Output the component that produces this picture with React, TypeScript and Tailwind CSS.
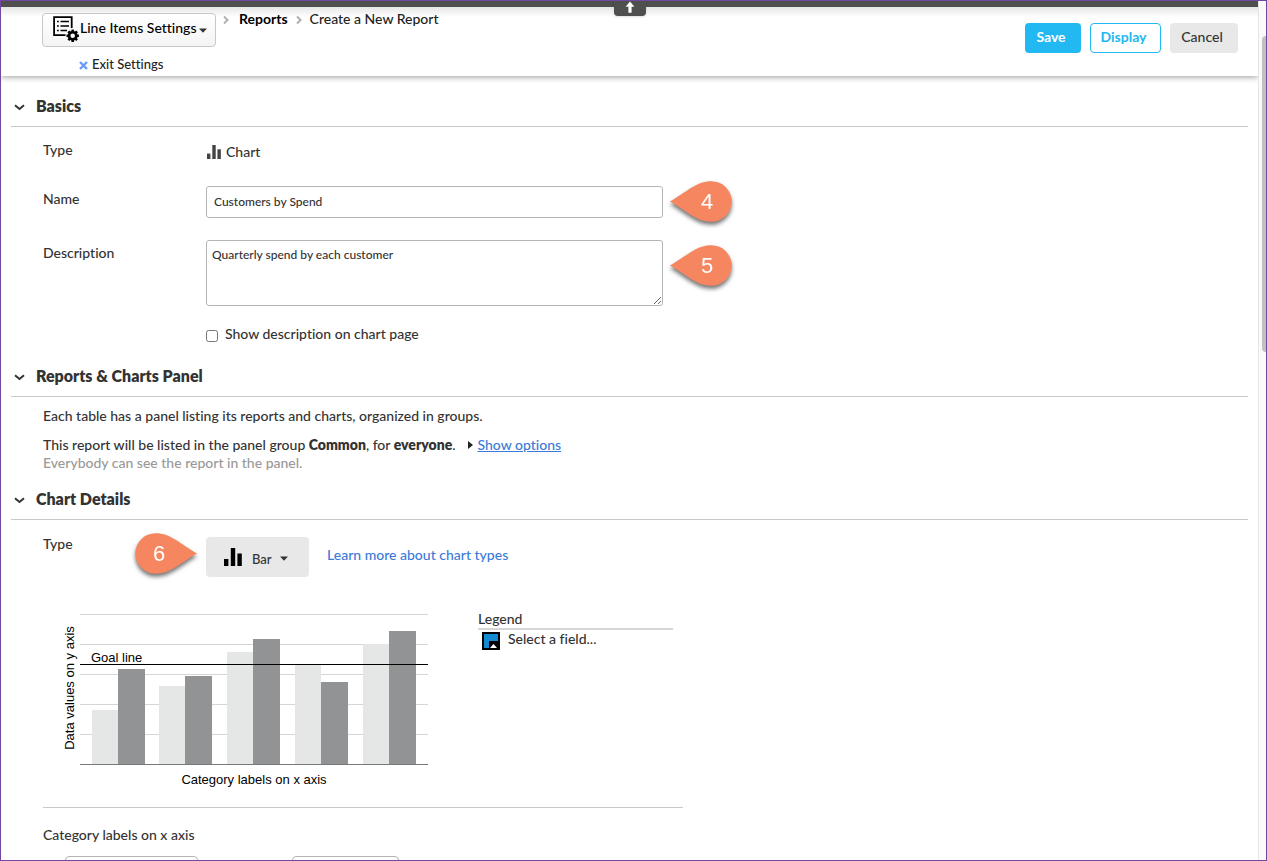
import { useState, type ReactNode } from "react";

function Caret({ className }: { className: string }) {
  return (
    <svg viewBox="0 0 8 5" className={className} aria-hidden="true">
      <path d="M0 0.5H8L4 4.7Z" fill="currentColor" />
    </svg>
  );
}

function BarsIcon({ className }: { className: string }) {
  return (
    <svg viewBox="0 0 18 18" className={className} fill="currentColor" aria-hidden="true">
      <rect x="0" y="11" width="4.4" height="7" />
      <rect x="6.8" y="0" width="4.4" height="18" />
      <rect x="13.4" y="5.5" width="4.4" height="12.5" />
    </svg>
  );
}

function SettingsIcon() {
  const teeth = [0, 45, 90, 135, 180, 225, 270, 315];
  return (
    <svg viewBox="0 0 26 27" className="h-[27px] w-[26px] shrink-0" aria-hidden="true">
      <path d="M12.5 19.2H1.1V1.1H18.7V12" fill="none" stroke="#000" strokeWidth="1.8" />
      <path d="M7.5 5.5H16M7.5 10H16M7.5 14.5H14" stroke="#000" strokeWidth="1.6" />
      <path d="M4 5.5H5.8M4 10H5.8M4 14.5H5.8" stroke="#000" strokeWidth="1.6" />
      <g transform="translate(19.7 19.8)">
        <circle r="3.6" fill="none" stroke="#000" strokeWidth="2.6" />
        {teeth.map((angle) => (
          <rect key={angle} x="-1.3" y="-6.2" width="2.6" height="2.6" transform={`rotate(${angle})`} />
        ))}
      </g>
    </svg>
  );
}

function Crumb() {
  return (
    <svg viewBox="0 0 6 8" className="mt-0.5 h-2 w-1.5" aria-hidden="true">
      <path d="M1 0.5L4.6 4L1 7.5" fill="none" stroke="#b0b0b0" strokeWidth="2" />
    </svg>
  );
}

function Callout({ value, flip = false }: { value: string; flip?: boolean }) {
  return (
    <svg
      viewBox="0 0 62 42"
      className="block h-[42px] w-[62px] overflow-visible drop-shadow-[0_3px_2px_rgba(0,0,0,0.55)]"
      aria-hidden="true"
    >
      <path
        d="M0 20.5C17 11 26 0.3 41.5 0.3A20.2 20.2 0 0 1 41.5 40.7C26 40.7 17 30 0 20.5Z"
        fill="#f58660"
        transform={flip ? "translate(62 0) scale(-1 1)" : undefined}
      />
      <text
        x={flip ? 24 : 37}
        y="28"
        textAnchor="middle"
        fill="#fff"
        className="font-['Liberation_Sans',Arial,sans-serif] text-[22px]"
      >
        {value}
      </text>
    </svg>
  );
}

function Section({ title, children }: { title: string; children: ReactNode }) {
  const [open, setOpen] = useState(true);
  return (
    <section>
      <h2 className="mx-2.5 border-b border-[#c8c8c8] text-[16px] font-extrabold">
        <button
          type="button"
          aria-expanded={open}
          onClick={() => setOpen(!open)}
          className="flex h-[39px] items-center gap-[11px] pb-0.5 pl-[3px]"
        >
          <svg viewBox="0 0 11 7" className="mt-1 h-[7px] w-[11px]" aria-hidden="true">
            <path d="M1 1.2L5.5 5L10 1.2" fill="none" stroke="#333" strokeWidth="2" />
          </svg>
          {title}
        </button>
      </h2>
      {open && <div className="px-[42px]">{children}</div>}
    </section>
  );
}

const groups = [
  { x: 32, light: 110, dark: 69 },
  { x: 99, light: 86, dark: 76 },
  { x: 167, light: 52, dark: 39 },
  { x: 235, light: 65, dark: 82 },
  { x: 303, light: 44, dark: 31 },
];

function SampleChart() {
  return (
    <svg
      viewBox="0 0 370 190"
      className="block h-[190px] w-[370px] font-['Liberation_Sans',Arial,sans-serif] text-[13px]"
      role="img"
      aria-label="Sample bar chart"
    >
      {[14, 44, 74, 104, 134].map((y) => (
        <rect key={y} x="20" y={y} width="348" height="1" fill="#d6d6d6" />
      ))}
      {groups.map((g) => (
        <g key={g.x}>
          <rect x={g.x} y={g.light} width="26" height={164 - g.light} fill="#e5e7e6" />
          <rect x={g.x + 26} y={g.dark} width="27" height={164 - g.dark} fill="#929395" />
        </g>
      ))}
      <rect x="20" y="64" width="348" height="1" fill="#000" />
      <rect x="20" y="164" width="348" height="1" fill="#77787a" />
      <text x="31" y="62">Goal line</text>
      <text x="194" y="184" textAnchor="middle">Category labels on x axis</text>
      <text transform="translate(14 88) rotate(-90)" textAnchor="middle">Data values on y axis</text>
    </svg>
  );
}

export default function App() {
  return (
    <div className="flex h-screen overflow-hidden border border-[#7148a0] bg-white font-[Lato,'Open_Sans',sans-serif] text-[14px] leading-[18px] font-medium text-[#333] [font-variant-ligatures:none]">
      <div className="min-w-0 flex-1 overflow-hidden">
        <header className="relative border-t-[6px] border-[#4f4f4f] bg-white shadow-[0_1px_6px_rgba(0,0,0,0.4)]">
          <div className="flex h-[69px] items-start justify-between bg-linear-to-b from-[#e6e6e6] to-white to-[10px] pt-[3px] pr-5 pl-[41px]">
            <div className="flex items-start text-[#222]">
              <div className="pt-[3px]">
                <button
                  type="button"
                  className="flex h-[34px] w-[174px] items-center rounded border border-[#c8c8c8] bg-linear-to-b from-white to-[#f4f4f4] pb-0.5 pl-2.5 text-black"
                >
                  <SettingsIcon />
                  <span className="ml-px pb-[3px] whitespace-nowrap">Line Items Settings</span>
                  <Caret className="mt-0.5 mr-2 ml-auto h-[5px] w-2 text-[#333]" />
                </button>
                <a href="#exit" className="mt-2 ml-[37px] flex items-center gap-1 text-[13px]">
                  <svg viewBox="0 0 9 9" className="mt-0.5 h-[9px] w-[9px]" aria-hidden="true">
                    <path d="M1 1L8 8M8 1L1 8" stroke="#699bf7" strokeWidth="2.4" />
                  </svg>
                  Exit Settings
                </a>
              </div>
              <nav aria-label="Breadcrumb" className="ml-[7px] flex items-center">
                <Crumb />
                <a href="#reports" className="mr-2 ml-2.5 font-bold text-black">Reports</a>
                <Crumb />
                <span className="ml-2">Create a New Report</span>
              </nav>
            </div>
            <div className="mt-[13px] flex gap-[9px]">
              <button type="button" className="h-[30px] w-14 rounded bg-[#22b8f1] pr-1 pb-0.5 font-bold text-white">Save</button>
              <button type="button" className="h-[30px] w-[71px] rounded border border-[#22b8f1] bg-white pr-1 pb-0.5 font-bold text-[#22b8f1]">Display</button>
              <button type="button" className="h-[30px] w-[68px] rounded bg-[#e8e8e8] pr-1 pb-0.5">Cancel</button>
            </div>
          </div>
          <button
            type="button"
            aria-label="Collapse header"
            className="absolute -top-1.5 left-1/2 flex h-[15px] w-8 -translate-x-1/2 items-center justify-center rounded-b bg-[#4f4f4f] shadow"
          >
            <svg viewBox="0 0 10 12" className="mb-1 h-3 w-2.5" aria-hidden="true">
              <path d="M5 0.5L9.4 5.8H6.6V11.8H3.4V5.8H0.6Z" fill="#fff" />
            </svg>
          </button>
        </header>

        <main className="pt-[11px]">
          <Section title="Basics">
            <div className="grid grid-cols-[163px_1fr] pt-3.5 pb-3.5">
              <span>Type</span>
              <div className="mt-px mb-6 flex h-[20px] items-center gap-[5px] pl-px">
                <BarsIcon className="h-3.5 w-3.5 text-[#444]" />
                Chart
              </div>
              <label htmlFor="name" className="pt-1">Name</label>
              <div className="mb-[22px] flex h-8 items-start gap-[7px]">
                <input
                  id="name"
                  defaultValue="Customers by Spend"
                  className="h-8 w-[457px] rounded-[3px] border border-[#b5b5b5] px-[7px] pb-0.5 text-[12px]"
                />
                <div className="-mt-[5px]"><Callout value="4" /></div>
              </div>
              <label htmlFor="description" className="pt-1">Description</label>
              <div className="mb-[19px] flex items-start gap-[7px]">
                <textarea
                  id="description"
                  defaultValue="Quarterly spend by each customer"
                  className="h-[66px] w-[457px] rounded-[3px] border border-[#b5b5b5] px-[5px] py-1.5 text-[12px] leading-4"
                />
                <div className="mt-[5px]"><Callout value="5" /></div>
              </div>
              <label className="col-start-2 flex items-center gap-[7px]">
                <input type="checkbox" className="mt-[3px] h-3 w-3" />
                Show description on chart page
              </label>
            </div>
          </Section>

          <Section title="Reports & Charts Panel">
            <div className="pt-2.5 pb-2">
              <p className="mb-[11px]">Each table has a panel listing its reports and charts, organized in groups.</p>
              <p className="flex items-center">
                <span>
                  This report will be listed in the panel group <b className="font-extrabold">Common</b>, for{" "}
                  <b className="font-extrabold">everyone</b>.
                </span>
                <svg viewBox="0 0 5 8" className="mr-[5px] ml-3 h-2 w-[5px]" aria-hidden="true">
                  <path d="M0 0L5 4L0 8Z" fill="#222" />
                </svg>
                <a href="#options" className="text-[#3b7ad9] underline">Show options</a>
              </p>
              <p className="text-[#999]">Everybody can see the report in the panel.</p>
            </div>
          </Section>

          <Section title="Chart Details">
            <div className="flex items-start pt-[13px]">
              <span className="mt-0.5 w-[92px]">Type</span>
              <Callout value="6" flip />
              <button
                type="button"
                className="mt-1 ml-[9px] flex h-10 w-[103px] items-center rounded bg-[#e8e8e8] pb-px pl-[18px] text-[13px]"
              >
                <BarsIcon className="h-[18px] w-[18px] text-black" />
                <span className="mt-1 ml-2.5">Bar</span>
                <Caret className="mt-1 ml-2 h-[5px] w-2" />
              </button>
              <a href="#types" className="mt-[13px] ml-[18px] text-[#3b7ad9]">Learn more about chart types</a>
            </div>
            <div className="mt-[23px] flex items-start pl-[17px]">
              <SampleChart />
              <div className="mt-[9px] ml-12 w-[195px]">
                <div className="border-b-2 border-[#d6d6d6] pt-px">Legend</div>
                <button type="button" className="ml-1 flex items-center gap-2">
                  <svg viewBox="0 0 18 18" className="h-[18px] w-[18px]" aria-hidden="true">
                    <path d="M0 0H18V18H0Z" />
                    <path d="M2 2H16V9H7V16H2Z" fill="#148ad0" />
                    <path d="M8 16L11.5 12L15 16Z" fill="#fff" />
                  </svg>
                  <span className="pb-1">Select a field...</span>
                </button>
              </div>
            </div>
            <hr className="mt-[17px] w-[640px] border-[#c8c8c8]" />
            <h3 className="mt-[18px]">Category labels on x axis</h3>
            <div className="mt-3 flex gap-[94px] pl-[22px]">
              <select aria-label="Category field" className="h-8 w-[133px] appearance-none rounded border border-[#b5b5b5]" />
              <select aria-label="Category grouping" className="h-8 w-[107px] appearance-none rounded border border-[#b5b5b5]" />
            </div>
          </Section>
        </main>
      </div>
      <div className="flex w-2 shrink-0 justify-end border-l border-[#e5e5e5] bg-[#fafafa] pt-[35px]" aria-hidden="true">
        <div className="h-[316px] w-1 rounded-l bg-[#c1c1c1]" />
      </div>
    </div>
  );
}
